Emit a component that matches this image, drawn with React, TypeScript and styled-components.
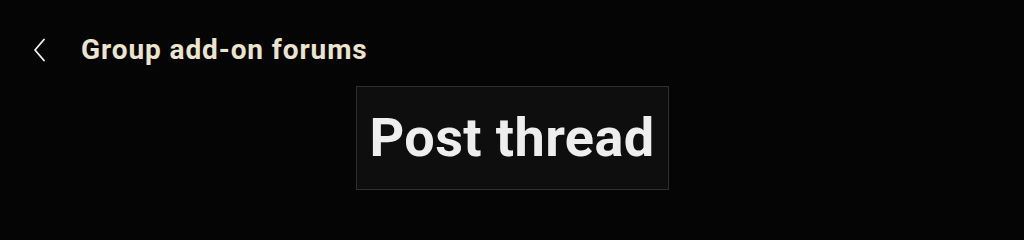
import styled, { createGlobalStyle } from "styled-components";

const GlobalStyle = createGlobalStyle`
  html, body {
    margin: 0;
    padding: 0;
    background: #050505;
  }
  body {
    font-family: Roboto, "Liberation Sans", sans-serif;
  }
`;

const Page = styled.div`
  width: 1024px;
  height: 240px;
  background: #050505;
  display: flex;
  flex-direction: column;
`;

const Header = styled.header`
  display: flex;
  align-items: center;
  height: 36px;
  margin-top: 32px;
  padding-left: 33px;
  gap: 35px;
`;

const BackButton = styled.button`
  display: flex;
  align-items: center;
  justify-content: center;
  background: none;
  border: none;
  padding: 0;
  width: 13px;
  height: 28px;
  color: #f4f4f4;
  cursor: pointer;
`;

const Title = styled.h1`
  margin: 0;
  font-family: Roboto, "Liberation Sans", sans-serif;
  font-weight: 700;
  font-size: 28px;
  line-height: 36px;
  letter-spacing: 0.9px;
  color: #ece4cc;
`;

const Body = styled.div`
  display: flex;
  justify-content: center;
  margin-top: 18px;
`;

const PostButton = styled.button`
  width: 313px;
  height: 104px;
  box-sizing: border-box;
  display: flex;
  align-items: center;
  justify-content: center;
  background: #0e0e0e;
  border: 1px solid #2f2f2f;
  border-radius: 0;
  padding: 0 0 2px;
  font-family: Roboto, "Liberation Sans", sans-serif;
  font-weight: 700;
  font-size: 54px;
  letter-spacing: 0.4px;
  color: #eeeeee;
  cursor: pointer;
`;

function ChevronLeft() {
  return (
    <svg width="13" height="28" viewBox="0 0 13 28" fill="none">
      <path d="M11 3.5 L2 14 L11 24.5" stroke="currentColor" strokeWidth="1.8" strokeLinecap="round" strokeLinejoin="round" />
    </svg>
  );
}

export default function App() {
  return (
    <>
      <GlobalStyle />
      <Page>
        <Header>
          <BackButton aria-label="Back">
            <ChevronLeft />
          </BackButton>
          <Title>Group add-on forums</Title>
        </Header>
        <Body>
          <PostButton>Post thread</PostButton>
        </Body>
      </Page>
    </>
  );
}
